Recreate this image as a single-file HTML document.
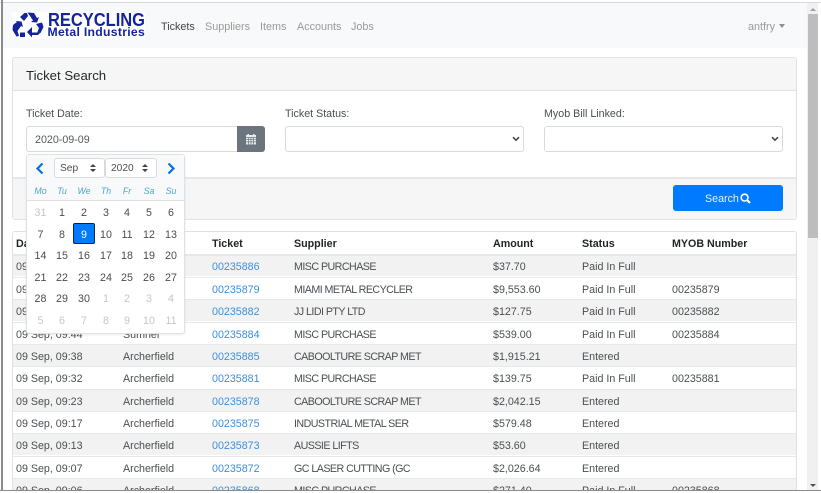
<!DOCTYPE html>
<html><head><meta charset="utf-8"><style>
html,body{margin:0;padding:0;width:821px;height:493px;overflow:hidden;background:#fff}
body{position:relative;font-family:"Liberation Sans",sans-serif;font-size:10.7px;color:#4a4f54}
.a{position:absolute}
.t{position:absolute;white-space:nowrap;line-height:14px}
.r{position:absolute;left:13px;width:783px;height:22px;border-top:1px solid #e6e8ea;box-sizing:border-box}
.g{background:#f2f2f2}
.r span{position:absolute;top:5px;white-space:nowrap;line-height:14px}
.c1{left:3px}.c2{left:110px}.c3{left:199px;color:#3d8fdc}.c4{left:281px;letter-spacing:-.55px}.c5{left:480px}.c6{left:569px}.c7{left:659px}
.th{font-weight:bold;color:#212529;font-size:10.7px;top:237px}
.nav{top:20px;font-size:10.8px;color:#9a9a9a}
.box{position:absolute;background:#fff;border:1px solid #d7dbdf;border-radius:3px;box-sizing:border-box}
.d{position:absolute;width:22px;text-align:center;line-height:14px;font-size:10.7px;color:#484c50}
.m{color:#c4c6c8}
.wd{position:absolute;top:185px;width:22px;text-align:center;font-style:italic;font-size:8.8px;color:#4fa6c4;line-height:12px}
</style></head><body>
<div class="a" style="left:0;top:0;width:821px;height:3px;background:#fff;border-bottom:1px solid #d8d8d8;box-sizing:border-box"></div>
<div class="a" style="left:1px;top:0;width:2px;height:493px;background:#8b8b8b"></div>
<div class="a" style="left:3px;top:3px;width:804px;height:45px;background:#f8f9fa"></div>
<div class="a" style="left:12px;top:12px;width:133px;height:27px;background:#fff"></div>

<svg class="a" style="left:12px;top:12px" width="33" height="27" viewBox="0 0 33 27">
<g fill="#14249b">
<path d="M8 5 L12.500 1 L15 1 L16 4 L12 9 Z"/>
<path d="M15.500 0.500 L22 1 L25 6 L27 5 L25 10.500 L19 10 L21 8.500 L18 4Z"/>
<path d="M1 13 L5 10 L3.500 9 L9.500 9.500 L11 15 L9 14 L5.500 19 L7 24 L4.500 24.500 L0.500 18Z"/>
<path d="M8 20.500 L13 20.500 L13 25 L8 25Z"/>
<path d="M24 12 L30 10.500 L31.500 15 L28.500 21 L25 21 L27 16Z"/>
<path d="M20 15 L15 20 L20 25.500 L20 23 L26 23 L28.500 20.500 L20 20.500Z"/>
</g></svg>
<div class="t" style="left:47.500px;top:11px;font-size:18px;line-height:18px;font-weight:bold;color:#14249b;transform:scaleX(.915);transform-origin:0 0">RECYCLING</div>
<div class="t" style="left:47.500px;top:26px;font-size:12.200px;line-height:13px;font-weight:bold;color:#14249b;letter-spacing:.3px">Metal Industries</div>

<div class="t nav" style="left:161px;color:#454545">Tickets</div>
<div class="t nav" style="left:205px">Suppliers</div>
<div class="t nav" style="left:260px">Items</div>
<div class="t nav" style="left:297px">Accounts</div>
<div class="t nav" style="left:351px">Jobs</div>
<div class="t nav" style="left:748px">antfry</div>
<div class="a" style="left:779px;top:24px;border-top:4px solid #8f8f8f;border-left:3.500px solid transparent;border-right:3.500px solid transparent"></div>

<div class="a" style="left:12px;top:57px;width:785px;height:163px;background:#fff;border:1px solid #dfe1e3;border-radius:3px;box-sizing:border-box"></div>
<div class="a" style="left:13px;top:58px;width:783px;height:33px;background:#f6f6f6;border-bottom:1px solid #dfe1e3;box-sizing:border-box;border-radius:3px 3px 0 0"></div>
<div class="t" style="left:26px;top:68px;font-size:13.200px;line-height:16px;color:#24292e">Ticket Search</div>

<div class="t" style="left:26px;top:107px;font-size:10.700px">Ticket Date:</div>
<div class="t" style="left:285px;top:107px;font-size:10.700px">Ticket Status:</div>
<div class="t" style="left:544px;top:107px;font-size:10.700px">Myob Bill Linked:</div>

<div class="box" style="left:26px;top:126px;width:212px;height:26px;border-radius:3px 0 0 3px"></div>
<div class="t" style="left:35px;top:133px;font-size:10.700px;color:#55595d">2020-09-09</div>
<div class="a" style="left:237px;top:126px;width:28px;height:26px;background:#6c757d;border-radius:0 3px 3px 0"></div>
<svg class="a" style="left:245px;top:133px" width="12" height="12" viewBox="0 0 12 12">
<path fill="#e9ecef" d="M1 2h1.500V1h1.500v1h4V1h1.500v1H11v9.500H1Z"/>
<path stroke="#6c757d" stroke-width=".7" fill="none" d="M1 4.500h10M1 6.700h10M1 8.900h10M3.500 4.500v7M6 4.500v7M8.500 4.500v7"/></svg>

<div class="box" style="left:285px;top:126px;width:239px;height:26px"></div>
<svg class="a" style="left:512px;top:136px" width="8" height="6" viewBox="0 0 8 6"><path d="M1 1.200 4 4.200 7 1.200" fill="none" stroke="#444" stroke-width="1.500"/></svg>
<div class="box" style="left:544px;top:126px;width:239px;height:26px"></div>
<svg class="a" style="left:771px;top:136px" width="8" height="6" viewBox="0 0 8 6"><path d="M1 1.200 4 4.200 7 1.200" fill="none" stroke="#444" stroke-width="1.500"/></svg>

<div class="a" style="left:13px;top:177px;width:783px;height:42px;background:#f6f6f6;border-top:2px solid #e6e7e8;box-sizing:border-box"></div>
<div class="a" style="left:673px;top:185px;width:110px;height:26px;background:#007bff;border-radius:3px"></div>
<div class="t" style="left:705px;top:192px;font-size:10.700px;color:#e6f1ff">Search</div>
<svg class="a" style="left:740px;top:193px" width="11" height="11" viewBox="0 0 11 11"><circle cx="4.600" cy="4.600" r="3.400" fill="none" stroke="#fff" stroke-width="1.600"/><path d="M7 7l3 3" stroke="#fff" stroke-width="2"/></svg>

<div class="a" style="left:12px;top:231px;width:785px;height:262px;background:#fff;border:1px solid #dfe1e3;border-bottom:0;border-radius:3px 3px 0 0;box-sizing:border-box"></div>
<div class="t th" style="left:16px">Date</div>
<div class="t th" style="left:212px">Ticket</div>
<div class="t th" style="left:294px">Supplier</div>
<div class="t th" style="left:493px">Amount</div>
<div class="t th" style="left:582px">Status</div>
<div class="t th" style="left:672px">MYOB Number</div>

<div class="r g" style="top:254px;border-top-width:2px"><span class="c1" style="top:4px">09 Sep, 09:51</span><span class="c2" style="top:4px">Sumner</span><span class="c3" style="top:4px">00235886</span><span class="c4" style="top:4px">MISC PURCHASE</span><span class="c5" style="top:4px">$37.70</span><span class="c6" style="top:4px">Paid In Full</span></div>
<div class="r" style="top:277px"><span class="c1">09 Sep, 09:50</span><span class="c2">Sumner</span><span class="c3">00235879</span><span class="c4">MIAMI METAL RECYCLER</span><span class="c5">$9,553.60</span><span class="c6">Paid In Full</span><span class="c7">00235879</span></div>
<div class="r g" style="top:299px"><span class="c1">09 Sep, 09:48</span><span class="c2">Sumner</span><span class="c3">00235882</span><span class="c4">JJ LIDI PTY LTD</span><span class="c5">$127.75</span><span class="c6">Paid In Full</span><span class="c7">00235882</span></div>
<div class="r" style="top:322px"><span class="c1">09 Sep, 09:44</span><span class="c2">Sumner</span><span class="c3">00235884</span><span class="c4">MISC PURCHASE</span><span class="c5">$539.00</span><span class="c6">Paid In Full</span><span class="c7">00235884</span></div>
<div class="r g" style="top:344px"><span class="c1">09 Sep, 09:38</span><span class="c2">Archerfield</span><span class="c3">00235885</span><span class="c4">CABOOLTURE SCRAP MET</span><span class="c5">$1,915.21</span><span class="c6">Entered</span></div>
<div class="r" style="top:366px"><span class="c1">09 Sep, 09:32</span><span class="c2">Archerfield</span><span class="c3">00235881</span><span class="c4">MISC PURCHASE</span><span class="c5">$139.75</span><span class="c6">Paid In Full</span><span class="c7">00235881</span></div>
<div class="r g" style="top:389px"><span class="c1">09 Sep, 09:23</span><span class="c2">Archerfield</span><span class="c3">00235878</span><span class="c4">CABOOLTURE SCRAP MET</span><span class="c5">$2,042.15</span><span class="c6">Entered</span></div>
<div class="r" style="top:411px"><span class="c1">09 Sep, 09:17</span><span class="c2">Archerfield</span><span class="c3">00235875</span><span class="c4">INDUSTRIAL METAL SER</span><span class="c5">$579.48</span><span class="c6">Entered</span></div>
<div class="r g" style="top:433px"><span class="c1">09 Sep, 09:13</span><span class="c2">Archerfield</span><span class="c3">00235873</span><span class="c4">AUSSIE LIFTS</span><span class="c5">$53.60</span><span class="c6">Entered</span></div>
<div class="r" style="top:456px"><span class="c1">09 Sep, 09:07</span><span class="c2">Archerfield</span><span class="c3">00235872</span><span class="c4">GC LASER CUTTING (GC</span><span class="c5">$2,026.64</span><span class="c6">Entered</span></div>
<div class="r g" style="top:478px;height:15px"><span class="c1">09 Sep, 09:06</span><span class="c2">Archerfield</span><span class="c3">00235868</span><span class="c4">MISC PURCHASE</span><span class="c5">$271.40</span><span class="c6">Paid In Full</span><span class="c7">00235868</span></div>

<!-- calendar -->
<div class="a" style="left:26px;top:154px;width:159px;height:180px;background:#fff;border:1px solid #dfe1e3;border-radius:3px;box-sizing:border-box;box-shadow:0 1px 2px rgba(0,0,0,.08)"></div>
<div class="a" style="left:27px;top:155px;width:157px;height:46px;background:#f8f9fa;border-bottom:1px solid #dfe1e3;box-sizing:border-box"></div>
<svg class="a" style="left:35px;top:162px" width="10" height="13" viewBox="0 0 10 13"><path d="M7.500 1.500 2.500 6.500 7.500 11.500" fill="none" stroke="#0b6fe0" stroke-width="2.200"/></svg>
<svg class="a" style="left:166px;top:162px" width="10" height="13" viewBox="0 0 10 13"><path d="M2.500 1.500 7.500 6.500 2.500 11.500" fill="none" stroke="#0b6fe0" stroke-width="2.200"/></svg>
<div class="box" style="left:54px;top:158px;width:51px;height:20px;background:#fff"></div>
<div class="t" style="left:60px;top:162px;font-size:10.200px">Sep</div>
<div class="box" style="left:105px;top:158px;width:52px;height:20px;background:#fff"></div>
<div class="t" style="left:111px;top:162px;font-size:10.200px">2020</div>
<svg class="a" style="left:90px;top:164px" width="6" height="8" viewBox="0 0 6 8"><path d="M3 0 6 3H0ZM3 8 0 5H6Z" fill="#3f4347"/></svg>
<svg class="a" style="left:142px;top:164px" width="6" height="8" viewBox="0 0 6 8"><path d="M3 0 6 3H0ZM3 8 0 5H6Z" fill="#3f4347"/></svg>

<div class="wd" style="left:29.500px">Mo</div><div class="wd" style="left:51px">Tu</div><div class="wd" style="left:73px">We</div><div class="wd" style="left:95px">Th</div><div class="wd" style="left:116px">Fr</div><div class="wd" style="left:138px">Sa</div><div class="wd" style="left:160px">Su</div>

<div class="a" style="left:73px;top:223px;width:22px;height:21px;background:#007bff;border:1px solid #10243c;border-radius:2px;box-sizing:border-box"></div>

<div class="d m" style="left:29.500px;top:206px">31</div><div class="d" style="left:51px;top:206px">1</div><div class="d" style="left:73px;top:206px">2</div><div class="d" style="left:95px;top:206px">3</div><div class="d" style="left:116px;top:206px">4</div><div class="d" style="left:138px;top:206px">5</div><div class="d" style="left:160px;top:206px">6</div>
<div class="d" style="left:29.500px;top:228px">7</div><div class="d" style="left:51px;top:228px">8</div><div class="d" style="left:73px;top:228px;color:#fff">9</div><div class="d" style="left:95px;top:228px">10</div><div class="d" style="left:116px;top:228px">11</div><div class="d" style="left:138px;top:228px">12</div><div class="d" style="left:160px;top:228px">13</div>
<div class="d" style="left:29.500px;top:249px">14</div><div class="d" style="left:51px;top:249px">15</div><div class="d" style="left:73px;top:249px">16</div><div class="d" style="left:95px;top:249px">17</div><div class="d" style="left:116px;top:249px">18</div><div class="d" style="left:138px;top:249px">19</div><div class="d" style="left:160px;top:249px">20</div>
<div class="d" style="left:29.500px;top:271px">21</div><div class="d" style="left:51px;top:271px">22</div><div class="d" style="left:73px;top:271px">23</div><div class="d" style="left:95px;top:271px">24</div><div class="d" style="left:116px;top:271px">25</div><div class="d" style="left:138px;top:271px">26</div><div class="d" style="left:160px;top:271px">27</div>
<div class="d" style="left:29.500px;top:292px">28</div><div class="d" style="left:51px;top:292px">29</div><div class="d" style="left:73px;top:292px">30</div><div class="d m" style="left:95px;top:292px">1</div><div class="d m" style="left:116px;top:292px">2</div><div class="d m" style="left:138px;top:292px">3</div><div class="d m" style="left:160px;top:292px">4</div>
<div class="d m" style="left:29.500px;top:314px">5</div><div class="d m" style="left:51px;top:314px">6</div><div class="d m" style="left:73px;top:314px">7</div><div class="d m" style="left:95px;top:314px">8</div><div class="d m" style="left:116px;top:314px">9</div><div class="d m" style="left:138px;top:314px">10</div><div class="d m" style="left:160px;top:314px">11</div>

<!-- scrollbar -->
<div class="a" style="left:807px;top:3px;width:11px;height:487px;background:#f0f0f0"></div>
<div class="a" style="left:808px;top:14px;width:10px;height:224px;background:#bdbdbd"></div>
<div class="a" style="left:810px;top:8px;border-bottom:3px solid #a0a0a0;border-left:3px solid transparent;border-right:3px solid transparent"></div>
<div class="a" style="left:810px;top:484px;border-top:3px solid #505050;border-left:3px solid transparent;border-right:3px solid transparent"></div>
<div class="a" style="left:0;top:490px;width:821px;height:3px;background:#fff;border-top:1px solid #8b8b8b;box-sizing:border-box"></div>
</body></html>
